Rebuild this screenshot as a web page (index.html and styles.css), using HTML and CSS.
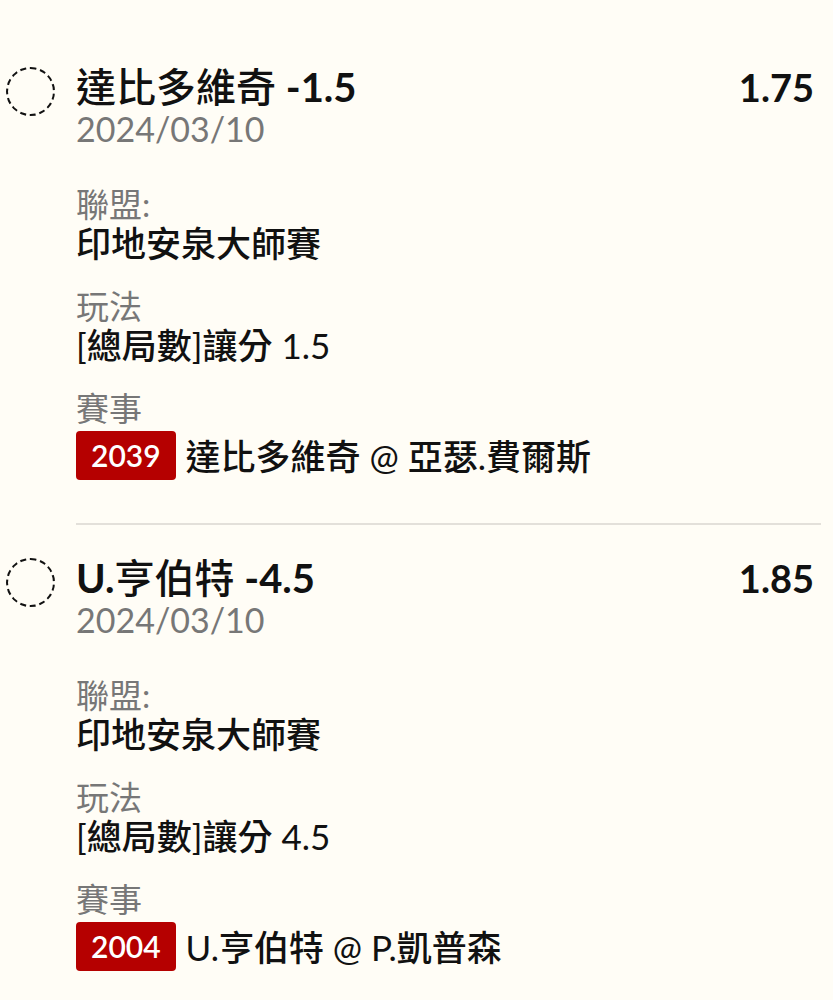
FILE: index.html
```html
<!doctype html>
<html lang="zh-Hant">
    <head>
        <meta charset="UTF-8" />
        <meta name="viewport" content="width=device-width, initial-scale=1.0" />
        <title>投注單</title>
        <link rel="stylesheet" href="styles.css">
    </head>
    <body>
        <div class="bet-list">
            <!-- Bet 1 -->
            <div class="bet">
                <span class="bet-check"></span>
                <div class="bet-body">
                    <div class="bet-head">
                        <span class="bet-title"><span class="pick">達比多維奇</span> -1.5</span>
                        <span class="bet-odds">1.75</span>
                    </div>
                    <div class="bet-date">2024/03/10</div>

                    <div class="field">
                        <div class="field-label">聯盟:</div>
                        <div class="field-value">印地安泉大師賽</div>
                    </div>
                    <div class="field">
                        <div class="field-label">玩法</div>
                        <div class="field-value">[總局數]讓分 1.5</div>
                    </div>
                    <div class="field">
                        <div class="field-label">賽事</div>
                        <div class="field-value match">
                            <span class="match-no">2039</span>
                            <span>達比多維奇 @ 亞瑟.費爾斯</span>
                        </div>
                    </div>
                </div>
            </div>

            <hr class="divider" />

            <!-- Bet 2 -->
            <div class="bet">
                <span class="bet-check"></span>
                <div class="bet-body">
                    <div class="bet-head">
                        <span class="bet-title">U.<span class="pick">亨伯特</span> -4.5</span>
                        <span class="bet-odds">1.85</span>
                    </div>
                    <div class="bet-date">2024/03/10</div>

                    <div class="field">
                        <div class="field-label">聯盟:</div>
                        <div class="field-value">印地安泉大師賽</div>
                    </div>
                    <div class="field">
                        <div class="field-label">玩法</div>
                        <div class="field-value">[總局數]讓分 4.5</div>
                    </div>
                    <div class="field">
                        <div class="field-label">賽事</div>
                        <div class="field-value match">
                            <span class="match-no">2004</span>
                            <span>U.亨伯特 @ P.凱普森</span>
                        </div>
                    </div>
                </div>
            </div>
        </div>
    </body>
</html>
```

FILE: styles.css
```css
body {
    font-family: Lato, "Noto Sans CJK TC", sans-serif;
    background-color: #fffdf6;
    color: #111;
    margin: 0;
    padding: 0;
}

.bet-list {
    padding-top: 34px;
}

/* One bet row: check circle + details */
.bet {
    display: flex;
    align-items: flex-start;
    gap: 21px;
    padding: 29px 19px 17px 6px;
}

.divider {
    border: none;
    border-top: 2px solid #e3e0da;
    margin: 2px 12px 0 76px;
}

.bet-check {
    flex: none;
    width: 45px;
    height: 45px;
    margin-top: 4px;
    border: 2px dashed #111;
    border-radius: 50%;
}

.bet-body {
    flex: 1;
}

.bet-head {
    display: flex;
    justify-content: space-between;
    align-items: baseline;
    font-weight: 700;
    line-height: 44px;
}

.bet-title {
    font-size: 40px;
}

/* CJK names are medium, not bold */
.bet-title .pick {
    font-family: "Noto Sans CJK TC Medium", "Noto Sans CJK TC", sans-serif;
    font-weight: 400;
}

.bet-odds {
    font-size: 38px;
}

.bet-date {
    font-size: 34px;
    line-height: 40px;
    color: #777;
    margin-bottom: 36px;
}

.field {
    margin-bottom: 24px;
}

.field-label {
    font-size: 33px;
    line-height: 38px;
    color: #777;
}

.field-value {
    font-family: Lato, "Noto Sans CJK TC Medium", "Noto Sans CJK TC", sans-serif;
    font-size: 35px;
    line-height: 40px;
}

.match {
    display: flex;
    align-items: center;
    gap: 10px;
    margin-top: 4px;
}

.match-no {
    background-color: #b50000;
    color: #fff;
    font-size: 30px;
    font-weight: 600;
    line-height: 49px;
    padding: 0 15px;
    border-radius: 4px;
}
```
